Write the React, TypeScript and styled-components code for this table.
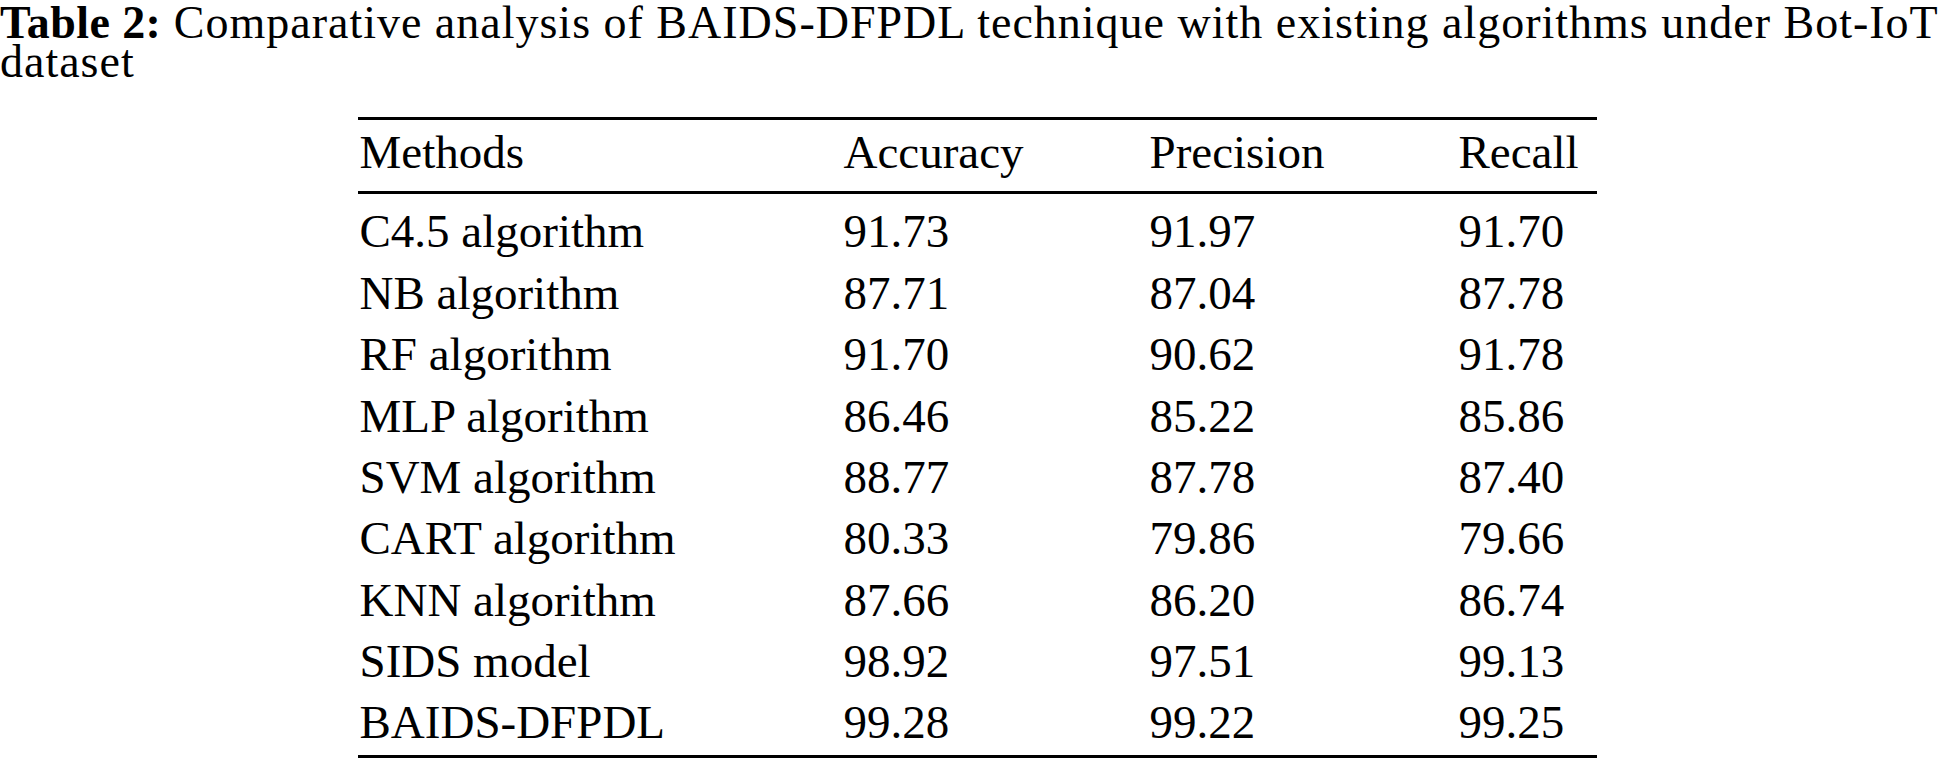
import React from 'react';
import styled, { createGlobalStyle } from 'styled-components';

const GlobalStyle = createGlobalStyle`
    html, body {
        margin: 0;
        padding: 0;
        background: #ffffff;
    }
    body {
        font-family: "Liberation Serif", "Times New Roman", serif;
        color: #000000;
    }
`;

const Page = styled.div`
    width: 1954px;
    height: 762px;
    overflow: hidden;
`;

const Caption = styled.p`
    margin: 0;
    padding-top: 3px;
    font-size: 46px;
    line-height: 39px;
    letter-spacing: 1px;
`;

const Label = styled.b`
    font-weight: 700;
    letter-spacing: 0.4px;
`;

const Table = styled.div`
    width: 1239px;
    margin: 36px auto 0;
    border-top: 3px solid #000;
    border-bottom: 3px solid #000;
    font-size: 47px;
`;

const Head = styled.div`
    padding: 2px 0 8px;
    border-bottom: 3px solid #000;
`;

const Body = styled.div`
    padding: 7px 0 1px;
`;

const Row = styled.div`
    display: grid;
    grid-template-columns: 484px 306px 309px 1fr;
    height: 61.375px;
    line-height: 61.375px;
    padding-left: 2px;
`;

const Cell = styled.div`
    white-space: nowrap;
`;

const columns = ['Methods', 'Accuracy', 'Precision', 'Recall'];

const rows = [
    ['C4.5 algorithm', '91.73', '91.97', '91.70'],
    ['NB algorithm', '87.71', '87.04', '87.78'],
    ['RF algorithm', '91.70', '90.62', '91.78'],
    ['MLP algorithm', '86.46', '85.22', '85.86'],
    ['SVM algorithm', '88.77', '87.78', '87.40'],
    ['CART algorithm', '80.33', '79.86', '79.66'],
    ['KNN algorithm', '87.66', '86.20', '86.74'],
    ['SIDS model', '98.92', '97.51', '99.13'],
    ['BAIDS-DFPDL', '99.28', '99.22', '99.25'],
];

export default function App() {
    return (
        <Page>
            <GlobalStyle />
            <Caption>
                <Label>Table 2:</Label> Comparative analysis of BAIDS-DFPDL technique with existing algorithms under Bot-IoT dataset
            </Caption>
            <Table>
                <Head>
                    <Row>
                        {columns.map((c) => (
                            <Cell key={c}>{c}</Cell>
                        ))}
                    </Row>
                </Head>
                <Body>
                    {rows.map((r) => (
                        <Row key={r[0]}>
                            {r.map((v, i) => (
                                <Cell key={i}>{v}</Cell>
                            ))}
                        </Row>
                    ))}
                </Body>
            </Table>
        </Page>
    );
}
